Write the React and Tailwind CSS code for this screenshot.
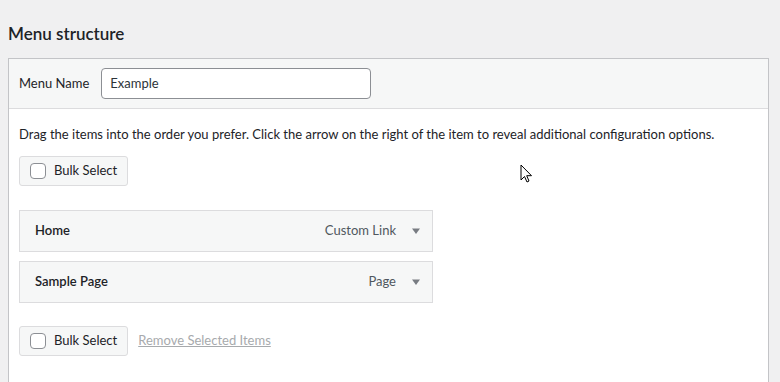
import React from "react";

const font = { fontFamily: 'Lato, "Noto Sans", sans-serif' };

const BulkSelect = () => (
  <label className="flex items-center gap-2 h-[30px] px-[10px] bg-[#f6f7f7] border border-[#dcdcde] rounded-[3px] text-[13px] text-[#1d2327]">
    <span className="w-4 h-4 bg-white border border-[#8c8f94] rounded-[4px]" />
    <span>Bulk Select</span>
  </label>
);

const MenuItem = ({ title, type }) => (
  <div className="w-[414px] h-[42px] flex items-center bg-[#f6f7f7] border border-[#dcdcde] pl-[15px] pr-[11px]">
    <span className="text-[13px] font-semibold text-[#1d2327]">{title}</span>
    <span className="ml-auto text-[13px] text-[#50575e]">{type}</span>
    <svg width="10" height="10" viewBox="0 0 10 10" className="ml-[15px]">
      <path d="M1 2.5 L9 2.5 L5 8 Z" fill="#787c82" />
    </svg>
  </div>
);

export default function App() {
  return (
    <div className="w-[780px] h-[382px] bg-[#f0f0f1] overflow-hidden relative" style={font}>
      <h2 className="pl-[8px] pt-[22px] pb-[12px] text-[17px] leading-[24px] font-semibold text-[#1d2327]">
        Menu structure
      </h2>
      <div className="ml-[8px] w-[761px] border border-[#c3c4c7] bg-white h-[400px]">
        <div className="h-[50px] bg-[#f6f7f7] border-b border-[#dcdcde] flex items-center px-[10px]">
          <span className="text-[13px] text-[#1d2327]">Menu Name</span>
          <div className="ml-[12px] w-[270px] h-[31px] bg-white border border-[#8c8f94] rounded-[4px] flex items-center px-[8px] text-[13px] text-[#2c3338]">
            Example
          </div>
        </div>
        <div className="px-[10px] pt-[15px]">
          <p className="text-[13px] leading-[20px] text-[#1d2327]">
            Drag the items into the order you prefer. Click the arrow on the right of the item to reveal additional configuration options.
          </p>
          <div className="mt-[12px] flex">
            <BulkSelect />
          </div>
          <div className="mt-[24px] flex flex-col gap-[9px]">
            <MenuItem title="Home" type="Custom Link" />
            <MenuItem title="Sample Page" type="Page" />
          </div>
          <div className="mt-[23px] flex items-center gap-[10px]">
            <BulkSelect />
            <span className="text-[13px] text-[#a7aaad] underline">Remove Selected Items</span>
          </div>
        </div>
      </div>
      <svg width="14" height="20" viewBox="0 0 14 20" className="absolute left-[520px] top-[164px]">
        <path d="M1 1 L1 16 L4.5 12.5 L7 18 L9 17 L6.7 11.7 L11.5 11.7 Z" fill="white" stroke="black" strokeWidth="1" strokeLinejoin="miter" />
      </svg>
    </div>
  );
}
